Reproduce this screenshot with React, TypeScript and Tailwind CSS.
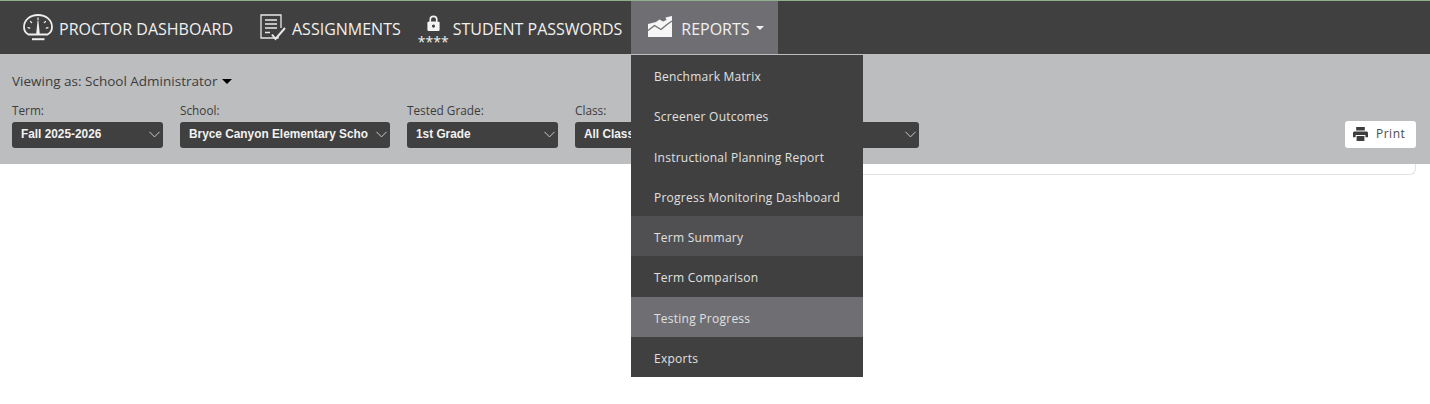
import React from "react";
import { ChevronDown } from "lucide-react";

const menuItems = [
  { label: "Benchmark Matrix", bg: "bg-[#404040]" },
  { label: "Screener Outcomes", bg: "bg-[#404040]" },
  { label: "Instructional Planning Report", bg: "bg-[#404040]" },
  { label: "Progress Monitoring Dashboard", bg: "bg-[#404040]" },
  { label: "Term Summary", bg: "bg-[#505052]" },
  { label: "Term Comparison", bg: "bg-[#404040]" },
  { label: "Testing Progress", bg: "bg-[#6f6f73]" },
  { label: "Exports", bg: "bg-[#404040]" },
];

function GaugeIcon() {
  return (
    <svg width="30" height="27" viewBox="0 0 30 27" fill="none" stroke="#eeeeee" strokeWidth="1.8" strokeLinecap="round">
      <path d="M5.5 20.5 C2.5 19 1 16 1 13 C1 6 7 1 15 1 C23 1 29 6 29 13 C29 16 27.5 19 24.5 20.5 Z" />
      <path d="M15 3.8v1.8M7.5 7.5l1.2 1.2M22.5 7.5l-1.2 1.2M5 13.6l1.8.5M25 13.6l-1.8.5" strokeWidth="1.2" />
      <path d="M13.2 20 L14.6 6.5 H15.4 L16.8 20 Z" fill="#eeeeee" stroke="none" />
      <path d="M9 25.2h12.5" strokeWidth="2" strokeLinecap="butt" />
    </svg>
  );
}

function AssignmentIcon() {
  return (
    <svg width="26" height="27" viewBox="0 0 26 27" fill="none" stroke="#e8e8e8" strokeWidth="1.3">
      <path d="M18 21.5 V24 H1 V1 H21 V14" />
      <path d="M5 6h12M5 10h12M5 14h12M5 18.5h5" />
      <path d="M12 20.5l3.5 4.5 9.5-11" strokeWidth="2" />
    </svg>
  );
}

function LockIcon() {
  return (
    <svg width="13" height="16.5" viewBox="0 0 16 20" fill="#f4f4f4">
      <path fillRule="evenodd" d="M3 8V5.5a5 5 0 0 1 10 0V8h1.5a1 1 0 0 1 1 1v9a1.5 1.5 0 0 1-1.5 1.5H2A1.5 1.5 0 0 1 .5 18V9a1 1 0 0 1 1-1H3Zm2-.2h6V5.5a3 3 0 0 0-6 0v2.3ZM8 11.6a1.9 1.9 0 1 0 0 3.8 1.9 1.9 0 0 0 0-3.8Z" />
    </svg>
  );
}

function ReportIcon() {
  return (
    <svg width="24" height="21" viewBox="0 0 24 21" className="-mt-[3px]">
      <path fill="#f6f6f6" d="M0 8 L8 6 L11.5 3.5 L15 5.5 L18.5 4 L17.5 1.5 L24 0 V21 H0 Z" />
      <path fill="none" stroke="#6f6f73" strokeWidth="1.3" d="M0 14.5 L6.5 9.5 L13 13.5 L19 8.5 L24 5" />
    </svg>
  );
}

function PrinterIcon() {
  return (
    <svg width="15" height="14" viewBox="0 0 15 14" fill="#3d3d3d">
      <path fillRule="evenodd" d="M3.2 0h8.6v3.6H3.2V0ZM1.6 4.5h11.8c.9 0 1.6.7 1.6 1.6v4.2h-2.6V8H2.6v2.3H0V6.1c0-.9.7-1.6 1.6-1.6ZM3.6 9h7.8v5H3.6V9Z" />
    </svg>
  );
}

function FilterSelect({ label, value, width }: { label: string; value: string; width: string }) {
  return (
    <div className={width}>
      <div className="text-[11.8px] leading-[16px] text-[#3c3c3c] mb-[4px]">{label}</div>
      <div className="h-[25.5px] bg-[#404040] rounded-[3px] flex items-center justify-between pl-[9px] overflow-hidden">
        <span className="font-['Liberation_Sans',sans-serif] font-bold text-[11.85px] text-[#f2f2f2] whitespace-nowrap">
          {value}
        </span>
        <ChevronDown size={19} strokeWidth={1.1} className="text-[#e0e0e0] shrink-0 -mr-[1px]" />
      </div>
    </div>
  );
}

export default function App() {
  return (
    <div className="relative h-[404px] bg-white overflow-hidden font-['Open_Sans',sans-serif]">
      <div className="h-[1px] bg-[#8fae8b]" />
      <nav className="h-[53px] bg-[#404040] flex items-stretch text-[#f0f0f0] text-[16px] pl-[23px]">
        <div className="flex items-center gap-[6px] mr-[27px]">
          <GaugeIcon />
          <span className="pt-[2px]">PROCTOR DASHBOARD</span>
        </div>
        <div className="flex items-center gap-[6px] mr-[16px]">
          <AssignmentIcon />
          <span className="pt-[2px]">ASSIGNMENTS</span>
        </div>
        <div className="flex items-center gap-[3px] mr-[9px]">
          <div className="w-[33px] self-start mt-[14px] flex flex-col items-center">
            <LockIcon />
            <span className="text-[14px] leading-[10px] tracking-[0px] mt-[5px] h-[10px]">****</span>
          </div>
          <span className="pt-[2px]">STUDENT PASSWORDS</span>
        </div>
        <div className="w-[147px] bg-[#6f6f73] flex items-center pl-[17px] gap-[9px]">
          <ReportIcon />
          <span className="pt-[2px]">REPORTS</span>
          <span className="w-0 h-0 border-x-[4.5px] border-x-transparent border-t-[4.5px] border-t-[#f0f0f0] -ml-[3px]" />
        </div>
      </nav>

      <section className="h-[110px] bg-[#bcbdbf] pl-[12px] pr-[14px] pt-[17px]">
        <div className="flex items-center text-[13.5px] leading-[20px] text-[#3c3c3c]">
          Viewing as: School Administrator
          <span className="ml-[5px] w-0 h-0 border-x-[5.5px] border-x-transparent border-t-[5.5px] border-t-black" />
        </div>
        <div className="flex items-end mt-[11px]">
          <div className="flex gap-[17px]">
            <FilterSelect label="Term:" value="Fall 2025-2026" width="w-[151px]" />
            <FilterSelect label="School:" value="Bryce Canyon Elementary Scho" width="w-[210px]" />
            <FilterSelect label="Tested Grade:" value="1st Grade" width="w-[151px]" />
            <FilterSelect label="Class:" value="All Classes" width="w-[344px]" />
          </div>
          <button className="ml-auto h-[27px] w-[71px] bg-white rounded-[3px] flex items-center pl-[8px] gap-[8px] text-[12px] tracking-[0.5px] text-[#4a4a4a]">
            <PrinterIcon />
            Print
          </button>
        </div>
      </section>

      <div className="h-[11px] ml-[700px] w-[716px] bg-white border-r border-b border-[#e2e2e2] rounded-br-[6px]" />

      <ul className="absolute left-[631px] top-[55px] w-[232px] text-[12px] tracking-[0.25px] text-[#e0e0e0]">
        {menuItems.map((item) => (
          <li key={item.label} className={`h-[40.25px] flex items-center pl-[23px] pt-[4px] ${item.bg}`}>
            {item.label}
          </li>
        ))}
      </ul>
    </div>
  );
}
